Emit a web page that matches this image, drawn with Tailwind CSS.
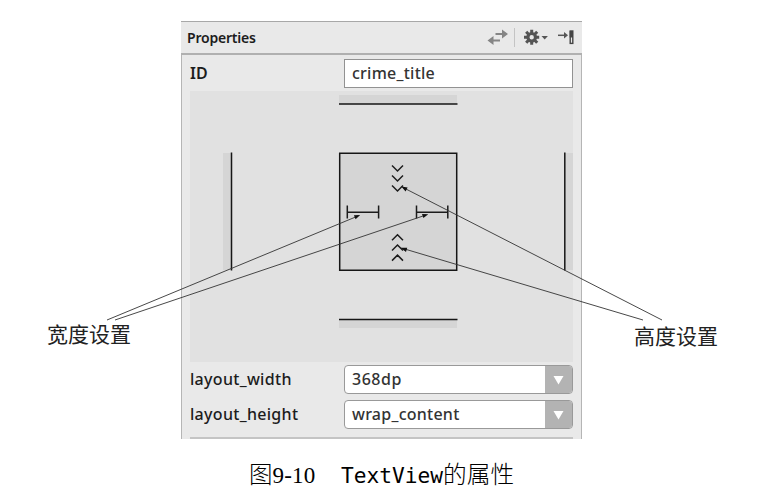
<!DOCTYPE html>
<html lang="zh-CN">
<head>
<meta charset="utf-8">
<title>Properties</title>
<script src="https://cdn.jsdelivr.net/npm/@tailwindcss/browser@4"></script>
</head>
<body class="bg-white">
<figure class="relative w-[769px] h-[496px] overflow-hidden pt-[21px]">
  <section class="ml-[181px] w-[401px] h-[418px] flex flex-col bg-[#e9e9e9] border-t border-[#a8a8a8] font-['Noto_Sans','Open_Sans',sans-serif] font-medium text-[#1c1c1c]">
    <header class="h-[33px] shrink-0 flex items-center justify-between pl-[6px] pr-2 border-b-2 border-[#b0b0b0]">
      <h1 class="text-[14px] leading-5 font-semibold tracking-[-0.2px]">Properties</h1>
      <svg class="w-[88px] h-[24px]" viewBox="486 26 88 24" fill="none">
        <g stroke="#858585" stroke-width="1.9"><path d="M495.500 34H504M491 40.500H500"/></g>
        <path d="M502 29.500l6 4.500-6 4.500zM493.500 36l-6 4.500 6 4.500z" fill="#858585"/>
        <path d="M514.500 28V47" stroke="#c4c4c4"/>
        <g stroke="#555" stroke-width="3"><path d="M531.700 29.800V33M531.700 41.500V44.800M524 37.300H527.500M535.700 37.300H539.200M526.200 31.800L528.700 34.500M534.500 40L537.200 42.800M537.200 31.800L534.500 34.500M528.700 40L526.200 42.800"/></g>
        <circle cx="531.700" cy="37.300" r="3.800" stroke="#555" stroke-width="3.200"/>
        <path d="M541.500 36h6.400l-3.200 3.400z" fill="#555"/>
        <path d="M558 35.300H565" stroke="#555" stroke-width="1.500"/>
        <path d="M564 32l4 3.300-4 3.300z" fill="#555"/>
        <rect x="570.200" y="31" width="2.600" height="12.400" stroke="#444" stroke-width="1.400"/>
        <rect x="569.700" y="31" width="3.300" height="6.500" fill="#444"/>
      </svg>
    </header>
    <div class="flex-1 flex flex-col border-x border-[#b5b5b5] px-2">
      <div class="flex items-center h-[36px] text-[16px]">
        <label class="w-[154px] font-semibold">ID</label>
        <div class="w-[229px] h-[29px] border border-[#929292] bg-white pl-[7px] leading-[27px] tracking-[0.25px] text-[#333]">crime_title</div>
      </div>
      <div class="h-[271px] bg-[#e1e1e1]"></div>
      <div class="flex items-center h-[34px] text-[16px]">
        <label class="w-[154px] tracking-[0.3px]">layout_width</label>
        <div class="w-[229px] h-[29px] flex rounded-[4px] overflow-hidden border border-[#999] bg-white">
          <span class="flex-1 pl-[7px] leading-[27px] tracking-[0.5px] text-[#333]">368dp</span>
          <span class="w-[27px] flex items-center justify-center bg-[#b3b3b3]"><svg class="w-[11px] h-[9px] mt-0.5" viewBox="0 0 11 9"><path d="M.5 0h10l-5 8.500z" fill="#fff"/></svg></span>
        </div>
      </div>
      <div class="flex items-center h-[36px] text-[16px]">
        <label class="w-[154px] tracking-[0.3px]">layout_height</label>
        <div class="w-[229px] h-[29px] flex rounded-[4px] overflow-hidden border border-[#999] bg-white">
          <span class="flex-1 pl-[7px] leading-[27px] tracking-[0.25px] text-[#333]">wrap_content</span>
          <span class="w-[27px] flex items-center justify-center bg-[#b3b3b3]"><svg class="w-[11px] h-[9px] mt-0.5" viewBox="0 0 11 9"><path d="M.5 0h10l-5 8.500z" fill="#fff"/></svg></span>
        </div>
      </div>
      <div class="mt-[5px] h-[2px] bg-[#c4c4c4]"></div>
    </div>
  </section>

  <svg class="absolute left-0 top-0 w-[769px] h-[496px]" viewBox="0 0 769 496" fill="none">
    <g fill="#d5d5d5">
      <path d="M339 95h118v9H339zM339 320h118v8H339zM223 153h8v117h-8zM565 153h8v117h-8z"/>
      <path d="M339.700 153.300h117v117h-117z" stroke="#161616" stroke-width="1.500"/>
    </g>
    <path d="M339 104h118.500M339 319.500h118.500M231.500 152.500v118M564.800 152.500v118" stroke="#161616" stroke-width="1.500"/>
    <g stroke="#1c1c1c" stroke-width="1.500">
      <path d="M392 165.500l5.500 5.500 5.500-5.500M392 175.500l5.500 5.500 5.500-5.500M392 185.500l5.500 5.500 5.500-5.500"/>
      <path d="M392 240.300l5.500-5.500 5.500 5.500M392 250.500l5.500-5.500 5.500 5.500M392 260.600l5.500-5.500 5.500 5.500"/>
      <path d="M347.300 205.500v13M378.600 205.500v13M347.300 212.300h31.300M416.500 205.500v13M447.800 205.500v13M416.500 212.300h31.300"/>
    </g>
    <path d="M107 320L358 216M115 320L426 215M662 320L403 187.500M643 320L403 248.500" stroke="#333" stroke-width=".9"/>
    <path d="M360.200 215l-4.600 4.200-1.700-4zM428.300 214.300l-4.900 3.800-1.400-4.100zM401.300 186.600l6.300 1-2 3.900zM400.500 247.800l6.700-.1-1.200 4.200z" fill="#111"/>
  </svg>

  <div class="absolute left-[47px] top-[319px] text-[21px] leading-[28px] whitespace-nowrap text-[#222] font-['Noto_Sans_CJK_SC',sans-serif] font-normal">宽度设置</div>
  <div class="absolute left-[634px] top-[321px] text-[21px] leading-[28px] whitespace-nowrap text-[#222] font-['Noto_Sans_CJK_SC',sans-serif] font-normal">高度设置</div>

  <figcaption class="ml-[249px] mt-[19px] flex items-baseline text-[23.500px] leading-[34px] whitespace-nowrap text-black font-['Liberation_Serif','Noto_Sans_CJK_SC',serif] font-normal">
    <span class="w-[92px]"><span class="font-light">图</span><span class="text-[23px] tracking-[0.200px]">9-10</span></span><span class="font-['DejaVu_Sans_Mono',monospace] text-[21.200px]">TextView</span><span class="font-light text-[23.700px]">的属性</span>
  </figcaption>
</figure>
</body>
</html>
